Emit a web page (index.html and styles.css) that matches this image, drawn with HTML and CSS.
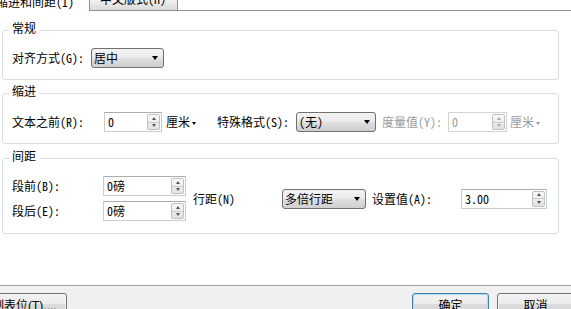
FILE: index.html
```html
<!DOCTYPE html>
<html lang="zh-CN">
<head>
    <meta charset="UTF-8">
    <title>段落</title>
    <link rel="stylesheet" href="styles.css">
</head>
<body>
    <div class="dialog">
        <div class="tabs">
            <div class="tab tab-active"><span>缩进和间距(I)</span></div>
            <div class="tab tab-other"><span>中文版式(H)</span></div>
            <div class="tab-rest"></div>
        </div>

        <div class="panel">
            <div class="group">
                <div class="group-title">常规</div>
                <div class="group-body body-general">
                    <span class="label w-align">对齐方式(G):</span>
                    <div class="combo w-combo-align"><span class="combo-text">居中</span><i class="caret"></i></div>
                </div>
            </div>

            <div class="group group-indent">
                <div class="group-title">缩进</div>
                <div class="group-body body-indent">
                    <span class="label w-before">文本之前(R):</span>
                    <div class="field w-field-before">
                        <span class="field-value">0</span>
                        <span class="spin"><i class="spin-up"></i><i class="spin-down"></i></span>
                    </div>
                    <span class="unit">厘米<i class="unit-caret"></i></span>
                    <span class="label w-special">特殊格式(S):</span>
                    <div class="combo w-combo-special"><span class="combo-text">(无)</span><i class="caret"></i></div>
                    <span class="label disabled w-measure">度量值(Y):</span>
                    <div class="field field-disabled w-field-measure">
                        <span class="field-value">0</span>
                        <span class="spin"><i class="spin-up"></i><i class="spin-down"></i></span>
                    </div>
                    <span class="unit disabled unit-last">厘米<i class="unit-caret"></i></span>
                </div>
            </div>

            <div class="group group-spacing">
                <div class="group-title">间距</div>
                <div class="group-body body-spacing">
                    <div class="stack">
                        <div class="stack-row">
                            <span class="label w-para">段前(B):</span>
                            <div class="field w-field-para">
                                <span class="field-value">0磅</span>
                                <span class="spin"><i class="spin-up"></i><i class="spin-down"></i></span>
                            </div>
                        </div>
                        <div class="stack-row">
                            <span class="label w-para">段后(E):</span>
                            <div class="field w-field-para">
                                <span class="field-value">0磅</span>
                                <span class="spin"><i class="spin-up"></i><i class="spin-down"></i></span>
                            </div>
                        </div>
                    </div>
                    <span class="label w-line">行距(N)</span>
                    <div class="combo w-combo-line"><span class="combo-text">多倍行距</span><i class="caret"></i></div>
                    <span class="label w-setting">设置值(A):</span>
                    <div class="field w-field-setting">
                        <span class="field-value">3.00</span>
                        <span class="spin"><i class="spin-up"></i><i class="spin-down"></i></span>
                    </div>
                </div>
            </div>
        </div>

        <div class="footer">
            <button class="btn btn-tabs">制表位(T)....</button>
            <button class="btn btn-ok">确定</button>
            <button class="btn btn-cancel">取消</button>
        </div>
    </div>
</body>
</html>
```

FILE: styles.css
```css
* {
    box-sizing: border-box;
}

body {
    margin: 0;
    background: #fff;
    color: #000;
    font-family: "Noto Sans Mono CJK SC", "Noto Sans CJK SC", sans-serif;
    font-size: 12px;
}

.dialog {
    width: 571px;
    height: 309px;
    overflow: hidden;
}

/* tab strip, cut off at the top */
.tabs {
    display: flex;
    height: 11px;
}

.tab {
    height: 11px;
    overflow: hidden;
    white-space: nowrap;
    line-height: 14px;
}

.tab-active {
    width: 89px;
}

.tab-active span {
    display: block;
    margin: -5px 0 0 -4px;
}

.tab-other {
    width: 89px;
    padding-left: 10px;
    border: 1px solid #8e9196;
    border-top: 0;
    background: linear-gradient(#f2f2f2, #d9d9d9);
}

.tab-other span {
    display: block;
    margin-top: -8px;
}

.tab-rest {
    flex: 1;
    border-bottom: 1px solid #8e9196;
}

.panel {
    height: 274px;
    padding: 19px 12px 0 2px;
}

/* group boxes */
.group {
    border: 1px solid #d5dfe5;
    border-radius: 3px;
}

.group-indent {
    margin-top: 13px;
}

.group-spacing {
    margin-top: 14px;
}

.group-title {
    width: fit-content;
    margin: -10px 0 0 6px;
    padding: 0 3px;
    background: #fff;
    line-height: 14px;
}

.group-body {
    display: flex;
    align-items: center;
    padding: 0 0 11px 9px;
}

.body-general {
    margin-top: 13px;
}

.body-indent {
    margin-top: 14px;
}

.body-spacing {
    margin-top: 13px;
    padding-bottom: 12px;
}

.label,
.unit {
    flex-shrink: 0;
    white-space: nowrap;
    line-height: 14px;
}

.disabled {
    color: #9a9a9a;
}

.w-align { width: 79px; }
.w-before { width: 92px; }
.w-special { width: 79px; margin-left: 21px; }
.w-measure { width: 66px; margin-left: 6px; }
.w-para { width: 91px; }
.w-line { width: 89px; margin-left: 7px; }
.w-setting { width: 89px; margin-left: 6px; }

.unit {
    display: flex;
    align-items: center;
    margin-left: 4px;
}

.unit-last {
    margin-left: 3px;
}

.unit-caret {
    margin: 2px 0 0 2px;
    border-left: 2.5px solid transparent;
    border-right: 2.5px solid transparent;
    border-top: 3px solid currentColor;
}

/* drop-down boxes */
.combo {
    display: flex;
    align-items: center;
    flex-shrink: 0;
    height: 20px;
    padding: 0 5px 0 2px;
    border: 1px solid #707070;
    border-radius: 3px;
    background: linear-gradient(#f3f3f3, #ebebeb 45%, #dddddd 55%, #cfcfcf);
}

.combo-text {
    flex: 1;
    line-height: 14px;
    white-space: nowrap;
}

.caret {
    border-left: 3px solid transparent;
    border-right: 3px solid transparent;
    border-top: 4px solid #000;
}

.w-combo-align { width: 73px; }
.w-combo-special { width: 80px; }
.w-combo-line { width: 84px; }

/* spin fields */
.field {
    display: flex;
    flex-shrink: 0;
    height: 20px;
    border: 1px solid #c9ccd1;
    border-top-color: #abadb3;
    background: #fff;
}

.field-value {
    flex: 1;
    padding-left: 3px;
    line-height: 18px;
    white-space: nowrap;
}

.field-disabled {
    border-color: #d2d4d7;
    color: #9a9a9a;
}

.w-field-before { width: 58px; }
.w-field-measure { width: 59px; }
.w-field-para { width: 83px; }
.w-field-setting { width: 86px; }

.spin {
    display: flex;
    flex-direction: column;
    width: 13px;
    margin: 1px;
    border: 1px solid #bcc1c7;
    border-radius: 2px;
    background: linear-gradient(#f8f8f8, #e2e2e2);
}

.spin-up,
.spin-down {
    flex: 1;
    display: flex;
    align-items: center;
    justify-content: center;
}

.spin-up {
    border-bottom: 1px solid #c9cdd2;
}

.spin-up::before {
    content: "";
    border-left: 2.5px solid transparent;
    border-right: 2.5px solid transparent;
    border-bottom: 3px solid #555;
}

.spin-down::before {
    content: "";
    border-left: 2.5px solid transparent;
    border-right: 2.5px solid transparent;
    border-top: 3px solid #555;
}

.field-disabled .spin-up::before {
    border-bottom-color: #a8a8a8;
}

.field-disabled .spin-down::before {
    border-top-color: #a8a8a8;
}

.stack {
    display: flex;
    flex-direction: column;
    gap: 5px;
}

.stack-row {
    display: flex;
    align-items: center;
}

/* bottom buttons */
.footer {
    display: flex;
    height: 24px;
    padding-top: 7px;
    border-top: 1px solid #a0a0a0;
    background: #f0f0f0;
}

.btn {
    flex-shrink: 0;
    height: 23px;
    padding: 2px 0 0;
    border: 1px solid #707070;
    border-radius: 3px;
    background: linear-gradient(#f2f2f2, #ebebeb 50%, #dddddd 50%, #cfcfcf);
    box-shadow: inset 0 0 0 1px rgba(255, 255, 255, 0.6);
    color: #000;
    font-family: "Liberation Sans", "Noto Sans CJK SC", sans-serif;
    font-size: 12px;
    line-height: 14px;
    white-space: nowrap;
}

.btn-tabs {
    width: 105px;
    margin-left: -38px;
    padding-left: 29px;
    text-align: left;
}

.btn-ok {
    width: 77px;
    margin-left: auto;
    border-color: #3c7fb1;
    box-shadow: inset 0 0 0 1px #a6e1f9;
}

.btn-cancel {
    width: 77px;
    margin-left: 8px;
    margin-right: -3px;
}
```
